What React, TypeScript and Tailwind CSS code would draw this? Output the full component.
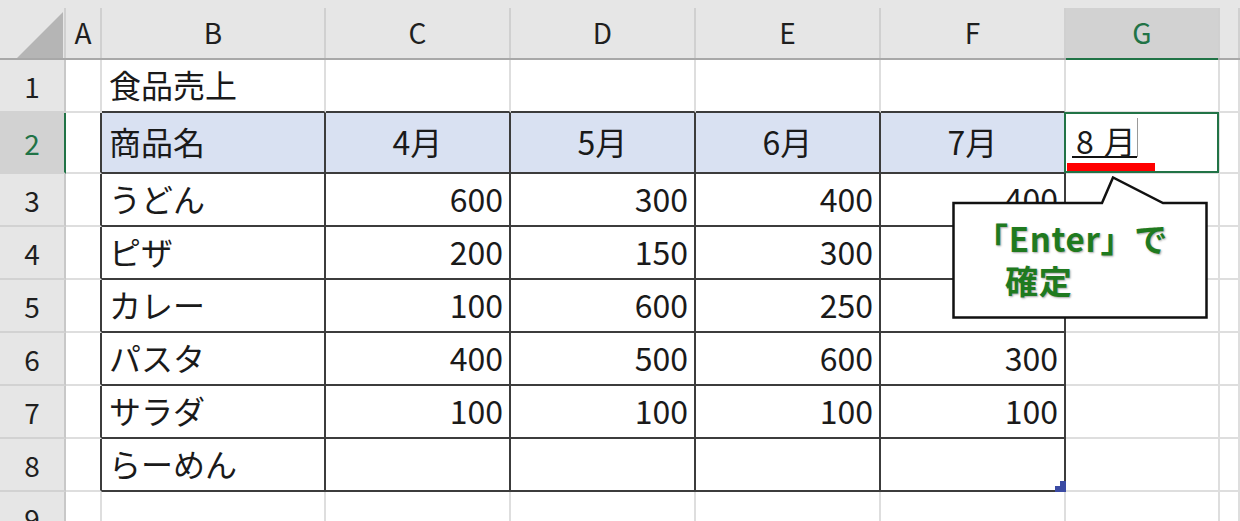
import React from "react";

const FONT = { fontFamily: '"Noto Sans CJK JP", "Noto Sans", sans-serif' };

const colLetters = ["A", "B", "C", "D", "E", "F", "G", ""];

type Cell = string | number;
const rows: Cell[][] = [
  ["", "食品売上", "", "", "", "", "", ""],
  ["", "商品名", "4月", "5月", "6月", "7月", "", ""],
  ["", "うどん", 600, 300, 400, 400, "", ""],
  ["", "ピザ", 200, 150, 300, "", "", ""],
  ["", "カレー", 100, 600, 250, "", "", ""],
  ["", "パスタ", 400, 500, 600, 300, "", ""],
  ["", "サラダ", 100, 100, 100, 100, "", ""],
  ["", "らーめん", "", "", "", "", "", ""],
  ["", "", "", "", "", "", "", ""],
];

function HeaderCell({ label, active }: { label: string; active?: boolean }) {
  return (
    <div className="flex h-full border-b-2 border-[#a8a8a8] bg-[#e6e6e6]">
      <div
        className={
          active
            ? "flex flex-1 mt-[8px] items-center justify-center bg-[#d2d2d2] border-b-2 border-[#217346] -mb-[2px] text-[#217346] text-[28px] leading-none pb-[2px]"
            : "flex flex-1 items-center justify-center text-[#1f1f1f] text-[28px] leading-none pt-[6px]"
        }
      >
        {label}
      </div>
      <div className="w-[2px] mt-[8px] bg-[#d0d0d0]" />
    </div>
  );
}

function RowHeader({ n }: { n: number }) {
  const active = n === 2;
  return (
    <div
      className={
        "flex items-center justify-center border-b-2 border-[#d2d2d2] text-[28px] leading-none border-r-2 " +
        (active
          ? "bg-[#d2d2d2] border-r-[#217346] text-[#217346]"
          : "bg-[#e6e6e6] border-r-[#c8c8c8] text-[#1f1f1f]")
      }
    >
      {n}
    </div>
  );
}

function BodyCell({ r, c, v }: { r: number; c: number; v: Cell }) {
  const inTableRow = r >= 2 && r <= 8;
  const darkRight = c <= 5 && inTableRow;
  const darkBottom = c >= 1 && c <= 5 && r >= 1 && r <= 8;
  const header = r === 2 && c >= 1 && c <= 5;
  const isNum = typeof v === "number";
  const isMonth = r === 2 && c >= 2 && c <= 5;
  let cls = "relative flex items-center text-[32px] leading-none text-[#1a1a1a] border-r-2 border-b-2 pb-[4px] ";
  cls += darkRight ? "border-r-[#3c3c3c] " : "border-r-[#dedede] ";
  cls += darkBottom ? "border-b-[#3c3c3c] " : "border-b-[#dedede] ";
  cls += header ? "bg-[#d9e1f2] " : "bg-white ";
  if (isNum) cls += "justify-end pr-[6px] ";
  else if (isMonth) cls += "justify-center ";
  else cls += "pl-[7px] ";

  if (r === 2 && c === 6) {
    return (
      <div className="relative border-r-2 border-b-2 border-r-[#dedede] border-b-[#dedede] bg-white">
        <div className="flex h-full items-end pl-[6px] pb-[14px]">
          <span className="flex items-end border-b-2 border-[#111] pr-[1px] h-[34px] text-[32px] leading-none text-[#1a1a1a]">
            <span className="ml-[4px]">8</span>
            <span className="ml-[10px]">月</span>
          </span>
          <span className="mb-[1px] w-[1px] h-[39px] bg-[#9a9a9a]" />
        </div>
        <div className="absolute left-[1px] top-[50px] w-[88px] h-[9px] bg-[#ff0000]" />
        <div className="absolute -left-[2px] -top-[1px] -right-[1px] -bottom-[1px] border-2 border-[#217346]" />
      </div>
    );
  }

  return (
    <div className={cls}>
      {v === "" ? null : v}
      {r === 8 && c === 5 ? (
        <svg className="absolute right-[-2px] bottom-[-2px]" width="11" height="11" viewBox="0 0 11 11">
          <path d="M5 0 H11 V11 H0 V5 H5 Z" fill="#3b4ba3" />
        </svg>
      ) : null}
    </div>
  );
}

export default function App() {
  return (
    <div className="relative w-[1240px] h-[521px] overflow-hidden bg-white" style={FONT}>
      <div className="grid grid-cols-[66px_36px_224px_185px_185px_185px_185px_154px_1fr] grid-rows-[60px_53px_61px_53px_53px_53px_53px_53px_53px_53px]">
        {/* corner */}
        <div className="flex border-b-2 border-[#a8a8a8] bg-[#e6e6e6]">
          <div className="relative flex-1">
            <svg className="absolute left-[17px] top-[12px]" width="47" height="46" viewBox="0 0 47 46">
              <path d="M0 46 L46 0 V46 Z" fill="#b5b5b5" />
            </svg>
          </div>
          <div className="w-[2px] mt-[8px] bg-[#d0d0d0]" />
        </div>
        {colLetters.map((l, i) => (
          <HeaderCell key={i} label={l} active={l === "G"} />
        ))}
        {rows.map((row, ri) => (
          <React.Fragment key={ri}>
            <RowHeader n={ri + 1} />
            {row.map((v, ci) => (
              <BodyCell key={ci} r={ri + 1} c={ci} v={v} />
            ))}
          </React.Fragment>
        ))}
      </div>

      {/* callout */}
      <div className="absolute left-[952px] top-[176px] w-[256px] h-[143px]">
        <svg className="absolute inset-0" width="256" height="143" viewBox="0 0 256 143">
          <path
            d="M1.5 27 H150 L161 1.5 L211 27 H254.5 V141.5 H1.5 Z"
            fill="#ffffff"
            stroke="#111111"
            strokeWidth="2.5"
            strokeLinejoin="miter"
          />
        </svg>
        <div
          className="relative flex flex-col pl-[23px] pt-[41px] text-[33px] font-bold leading-[42px] tracking-[0.7px] text-[#1f7a1f] whitespace-nowrap"
          style={{ textShadow: "1px 1px 2px rgba(0,0,0,0.35)" }}
        >
          <span>「Enter」で</span>
          <span className="pl-[30px]">確定</span>
        </div>
      </div>
    </div>
  );
}
